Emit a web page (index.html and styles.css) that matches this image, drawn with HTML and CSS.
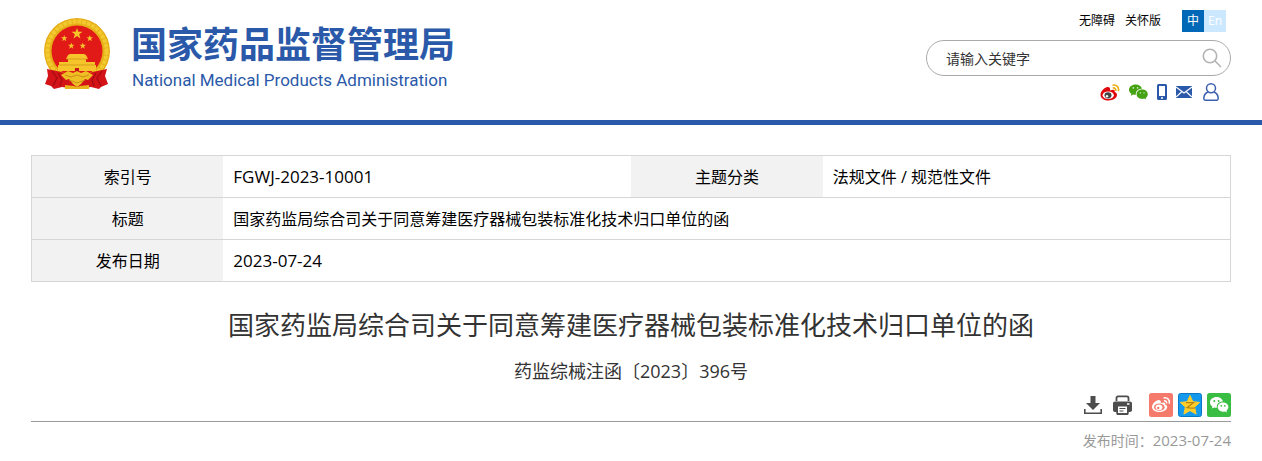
FILE: index.html
```html
<!DOCTYPE html>
<html lang="zh-CN">
<head>
<meta charset="utf-8">
<title>国家药监局综合司关于同意筹建医疗器械包装标准化技术归口单位的函</title>
<link rel="stylesheet" href="styles.css">
</head>
<body>
<svg class="sprite" aria-hidden="true">
  <symbol id="star" viewBox="0 0 20 20"><path d="M10 0l2.400 7H20l-6 4.500 2.200 7.500L10 14.500 3.800 19 6 11.500 0 7h7.600z"/></symbol>
</svg>
<header class="header">
  <div class="wrap header-row">
    <a class="brand" href="#">
      <svg class="emblem" viewBox="0 0 66 72" aria-hidden="true">
        <circle cx="33" cy="33" r="33" fill="#e6ae17"/>
        <circle cx="33" cy="33" r="29.500" fill="none" stroke="#f2c92e" stroke-width="4" stroke-dasharray="4 .8"/>
        <circle cx="33" cy="33" r="25.500" fill="#e11a17"/>
        <g fill="#f5c52b">
          <use href="#star" x="27.500" y="10" width="11" height="11"/>
          <use href="#star" x="17" y="17" width="6.500" height="6.500"/>
          <use href="#star" x="42.500" y="17" width="6.500" height="6.500"/>
          <use href="#star" x="24" y="24.500" width="6.500" height="6.500"/>
          <use href="#star" x="35.500" y="24.500" width="6.500" height="6.500"/>
          <path d="M24 37l2-1h14l2 1 2 4H22zM24 41h18v3H24zM15 44h36v3H15zM14 47h38v6H14z"/>
        </g>
        <path d="M22 41h22M15 47h36" stroke="#cf8a12" stroke-width=".7"/>
        <path d="M31 50h4v4h-4z" fill="#c41512"/>
        <path d="M3 51l10 2 8 2 12 0 12 0 8-2 10-2-2 7 3 8-7 3-2 2-8-2-8 1-12 0-2 0-7-1-8 2-3-3-6-2 3-8z" fill="#d31318"/>
        <path d="M8 53l5 7-4 8M58 53l-5 7 4 8M14 55l4 7-2 6M52 55l-4 7 2 6" fill="none" stroke="#a30b10" stroke-width="1.200"/>
        <path d="M17 57l7-4 5 2 4-2 4 2 5-2 7 4-5 5-3-1-4 5-4 3-4-3-4-5-3 1z" fill="#efbe25"/>
        <path d="M21 57l6 2 6-2 6 2 6-2M25 62l8 3 8-3" fill="none" stroke="#c98d14"/>
        <path d="M21 67l9 1 3 1 3-1 9-1v4H21z" fill="#e9b31c"/>
      </svg>
      <span class="brand-text">
        <span class="brand-cn">国家药品监督管理局</span>
        <span class="brand-en" lang="en">National Medical Products Administration</span>
      </span>
    </a>
    <div class="header-tools">
      <nav class="top-links">
        <a href="#">无障碍</a>
        <a href="#">关怀版</a>
        <span class="lang"><a class="lang-on" href="#">中</a><a class="lang-off" href="#" lang="en">En</a></span>
      </nav>
      <form class="search" role="search">
        <input class="search-input" type="text" aria-label="请输入关键字" placeholder="请输入关键字">
        <button class="search-button" type="button" aria-label="搜索">
          <svg width="20" height="20" viewBox="0 0 20 20" fill="none" stroke="#b3b3b3" stroke-width="1.600"><circle cx="8" cy="8" r="6.700"/><path d="M12.800 12.800L19 19"/></svg>
        </button>
      </form>
      <nav class="socials">
        <a href="#" aria-label="微博">
          <svg width="20" height="17" viewBox="0 0 20 17"><path d="M7.500 3C5 3.200.5 7 .5 11c0 3.500 4 5.500 8 5.500 5 0 8.500-2.800 8.500-5.500 0-1.800-1.200-2.500-2.300-2.900.7-2-.7-3.200-4.700-1.700C10.500 4 9.600 2.900 7.500 3z" fill="#e0070b"/><ellipse cx="8.200" cy="11.200" rx="5.600" ry="3.800" fill="#fff"/><ellipse cx="8" cy="11.300" rx="3.500" ry="3.100" fill="#444"/><circle cx="7" cy="12.200" r="1.200" fill="#fff"/><path d="M12.500 1.200c4-1 7 2.200 5.800 6M12.800 4c2-.4 3.400 1 2.900 2.900" fill="none" stroke="#e9ae13" stroke-width="1.600"/></svg>
        </a>
        <a href="#" aria-label="微信">
          <svg width="19" height="16" viewBox="0 0 19 16" fill="#44a213"><path d="M6.500.5C3 .5 0 2.800 0 5.700c0 1.700.9 3 2.400 4l-.7 2 2.500-1.200c1 .3 1.700.4 2.700.3C6.300 7.200 9 4.700 13 4.700 12.400 2.300 9.900.5 6.500.5z"/><path d="M13.200 5.500c-3.200 0-5.600 2-5.600 4.700 0 2.600 2.400 4.700 5.600 4.700.7 0 1.300-.1 2-.3l2 1-.5-1.700c1.300-.9 2.100-2.200 2.100-3.700 0-2.600-2.500-4.700-5.600-4.700z"/><g fill="#d9efce"><circle cx="4.300" cy="3.900" r=".8"/><circle cx="8.600" cy="3.900" r=".8"/><circle cx="11.400" cy="8.900" r=".7"/><circle cx="15" cy="8.900" r=".7"/></g></svg>
        </a>
        <a href="#" aria-label="手机版">
          <svg width="10" height="16" viewBox="0 0 10 16"><rect width="10" height="16" rx="1.500" fill="#2b59a9"/><path d="M2 2h6v10H2z" fill="#fff"/><circle cx="5" cy="14" r="1" fill="#fff"/></svg>
        </a>
        <a href="#" aria-label="邮箱">
          <svg width="16" height="12" viewBox="0 0 16 12"><path d="M0 0h16v12H0z" fill="#2b59a9"/><path d="M0 1l8 6 8-6M0 11l5.500-5M16 11l-5.500-5" fill="none" stroke="#fff" stroke-width="1.200"/></svg>
        </a>
        <a class="user" href="#" aria-label="用户">
          <svg width="16" height="18" viewBox="0 0 16 18" fill="none" stroke="#3c5fb0" stroke-width="1.500"><circle cx="8" cy="5.300" r="4.500"/><path d="M4.900 9C2 10.300.8 12.800.8 15.500c0 1.200.4 1.700 1.400 1.700h11.600c1 0 1.400-.5 1.400-1.700 0-2.700-1.200-5.200-4.100-6.500"/></svg>
        </a>
      </nav>
    </div>
  </div>
</header>

<main class="wrap">
  <table class="info">
    <colgroup><col class="col-label"><col class="col-value"><col class="col-label"><col class="col-value"></colgroup>
    <tr><th scope="row">索引号</th><td class="code">FGWJ-2023-10001</td><th scope="row">主题分类</th><td>法规文件 / 规范性文件</td></tr>
    <tr><th scope="row">标题</th><td colspan="3">国家药监局综合司关于同意筹建医疗器械包装标准化技术归口单位的函</td></tr>
    <tr><th scope="row">发布日期</th><td class="code" colspan="3">2023-07-24</td></tr>
  </table>

  <h1 class="title">国家药监局综合司关于同意筹建医疗器械包装标准化技术归口单位的函</h1>
  <p class="doc-number">药监综械注函〔2023〕396号</p>

  <div class="actions">
    <button type="button" aria-label="下载">
      <svg width="18" height="24" viewBox="0 0 18 24" fill="#4d4d4d"><path d="M6.500 3h5v7H16l-7 7-7-7h4.500zM0 16h1.600v3.400h14.800V16H18v5H0z"/></svg>
    </button>
    <button class="print" type="button" aria-label="打印">
      <svg width="19" height="24" viewBox="0 0 19 24"><path d="M3.500 8V5c0-1 .6-1.600 1.600-1.600h8.800c1 0 1.600.6 1.600 1.600v3" fill="none" stroke="#4d4d4d" stroke-width="1.800"/><path d="M2 8.500h15c1.200 0 2 .8 2 2V17c0 1.200-.8 2-2 2h-1.300v1.500c0 .9-.6 1.500-1.500 1.500H4.800c-.9 0-1.500-.6-1.500-1.500V19H2c-1.200 0-2-.8-2-2v-6.500c0-1.200.8-2 2-2z" fill="#4d4d4d"/><path d="M5 13.500h9V20H5zM14 10.300h2.500v1.400H14z" fill="#fff"/><path d="M6.500 15h6v1h-6zM6.500 17.500h4v1h-4z" fill="#4d4d4d"/></svg>
    </button>
    <a class="share share-first" href="#" aria-label="分享到微博">
      <svg width="24" height="24" viewBox="0 0 24 24"><rect width="24" height="24" rx="2.500" fill="#f67a6b"/><path d="M9.500 7C7 7.200 3 10.800 3 14c0 3 3.600 5 7.500 5 4.500 0 7.700-2.500 7.700-5 0-1.500-1-2.200-2.200-2.500.6-1.700-.6-2.700-4.200-1.500.4-2-.4-3.100-2.300-3z" fill="#fff"/><ellipse cx="10.300" cy="14.200" rx="5.300" ry="3.700" fill="#f67a6b"/><ellipse cx="10" cy="14.300" rx="3.400" ry="2.900" fill="#fff"/><circle cx="9.200" cy="15" r="1.200" fill="#f67a6b"/><path d="M14.500 5c4-.9 6.700 2 5.700 5.800M14.900 7.800c1.900-.3 3 .9 2.600 2.700" fill="none" stroke="#fff" stroke-width="1.500"/></svg>
    </a>
    <a class="share" href="#" aria-label="分享到QQ空间">
      <svg width="24" height="24" viewBox="0 0 24 24"><rect x=".5" y=".5" width="23" height="23" rx="2" fill="#1599ed" stroke="#0b78c6"/><path d="M12 2.500l2.800 6.200 6.900.7-5.100 4.700 1.500 7L12 17.600l-6.100 3.500 1.500-7-5.100-4.700 6.900-.7z" fill="#ffce29" stroke="#ffce29" stroke-linejoin="round"/><path d="M8 9.700h7.500L9 14.700c2.500.6 5 .6 8 .2" fill="none" stroke="#b98512" stroke-width="1.300"/></svg>
    </a>
    <a class="share" href="#" aria-label="分享到微信">
      <svg width="24" height="24" viewBox="0 0 24 24"><rect width="24" height="24" rx="2.500" fill="#39bd43"/><g fill="#fff"><path d="M9.500 4C6 4 3 6.400 3 9.400c0 1.700.9 3.200 2.400 4.200L4.800 15.500 7.300 14.400c1 .3 1.600.4 2.600.3C9.300 11 12 8.600 16 8.600 15.400 6 12.900 4 9.500 4z"/><path d="M16 9.500c-3 0-5.300 2-5.300 4.600 0 2.500 2.300 4.600 5.300 4.600.7 0 1.300-.1 2-.3l1.900 1-.5-1.700c1.200-.8 2-2.100 2-3.600 0-2.600-2.400-4.600-5.400-4.600z"/></g><g fill="#39bd43"><circle cx="7.300" cy="8" r="1"/><circle cx="11.600" cy="8" r="1"/><circle cx="14.300" cy="12.800" r=".9"/><circle cx="17.800" cy="12.800" r=".9"/></g></svg>
    </a>
  </div>
  <p class="published">发布时间：<time datetime="2023-07-24">2023-07-24</time></p>
</main>
</body>
</html>
```
FILE: styles.css
```css
* {
  box-sizing: border-box;
}

body {
  margin: 0;
  background: #fff;
  color: #000;
  font-family: "Open Sans", "Noto Sans CJK SC", sans-serif;
  font-size: 16px;
}

a {
  color: inherit;
  text-decoration: none;
}

svg {
  display: block;
}

.sprite {
  display: none;
}

.wrap {
  max-width: 1200px;
  margin: 0 auto;
}

.header {
  border-bottom: 5px solid #2b59a9;
}

.header-row {
  display: flex;
  justify-content: space-between;
  min-height: 120px;
}

.brand {
  display: flex;
  align-items: flex-start;
  gap: 21px;
  padding: 18px 0 0 13px;
  color: #2b59a9;
}

.emblem {
  width: 66px;
  height: 72px;
}

.brand-text {
  display: flex;
  flex-direction: column;
  padding-top: 8px;
}

.brand-cn {
  font-family: "Liberation Sans", "Noto Sans CJK SC", sans-serif;
  font-size: 36px;
  font-weight: 700;
  line-height: 40px;
}

.brand-en {
  padding-left: 1px;
  font-family: Roboto, sans-serif;
  font-size: 17px;
  line-height: 28px;
}

.header-tools {
  width: 305px;
  padding-top: 10px;
}

.top-links {
  display: flex;
  justify-content: flex-end;
  align-items: center;
  gap: 10px;
  padding-right: 5px;
  font-size: 12px;
  line-height: 22px;
}

.lang {
  display: flex;
  margin-left: 11px;
  text-align: center;
  color: #fff;
}

.lang-on,
.lang-off {
  width: 22px;
}

.lang-on {
  background: #0068b7;
}

.lang-off {
  background: #cce8ff;
}

.search {
  display: flex;
  align-items: center;
  height: 36px;
  margin-top: 8px;
  padding: 0 8px 0 19px;
  border: 1px solid #aaa;
  border-radius: 18px;
}

.search-input {
  flex: 1;
  min-width: 0;
  padding: 0;
  border: 0;
  outline: 0;
  background: none;
  font: inherit;
  font-size: 14px;
}

.search-input::placeholder {
  color: #333;
}

.search-button,
.actions button {
  padding: 0;
  border: 0;
  background: none;
  cursor: pointer;
}

.socials {
  display: flex;
  justify-content: flex-end;
  align-items: center;
  gap: 9px;
  padding: 7px 12px 0 0;
}

.user {
  margin-left: 2px;
}

.info {
  width: 100%;
  margin-top: 30px;
  border: 1px solid #d6d6d6;
  border-collapse: collapse;
  table-layout: fixed;
}

.col-label {
  width: 16%;
}

.col-value {
  width: 34%;
}

.info tr {
  border-bottom: 1px solid #d6d6d6;
}

.info th,
.info td {
  height: 42px;
  padding: 0 10px;
  line-height: 24px;
}

.info th {
  background: #f2f2f2;
  font-weight: 400;
  text-align: center;
}

.info .code {
  font-size: 17px;
}

.title {
  margin: 23px 0 0;
  color: #333;
  font-size: 26px;
  font-weight: 400;
  line-height: 40px;
  text-align: center;
}

.doc-number {
  margin: 11px 0 0;
  color: #333;
  font-size: 18px;
  line-height: 30px;
  text-align: center;
}

.actions {
  display: flex;
  justify-content: flex-end;
  margin-top: 7px;
  padding-bottom: 4px;
  border-bottom: 1px solid #999;
}

.print {
  margin-left: 11px;
}

.share {
  margin-left: 5px;
}

.share-first {
  margin-left: 17px;
}

.published {
  margin: 8px 0 0;
  color: #999;
  font-family: "Open Sans", "Noto Sans CJK TC", sans-serif;
  font-size: 14px;
  line-height: 20px;
  text-align: right;
}

.published time {
  font-size: 15px;
}
```
